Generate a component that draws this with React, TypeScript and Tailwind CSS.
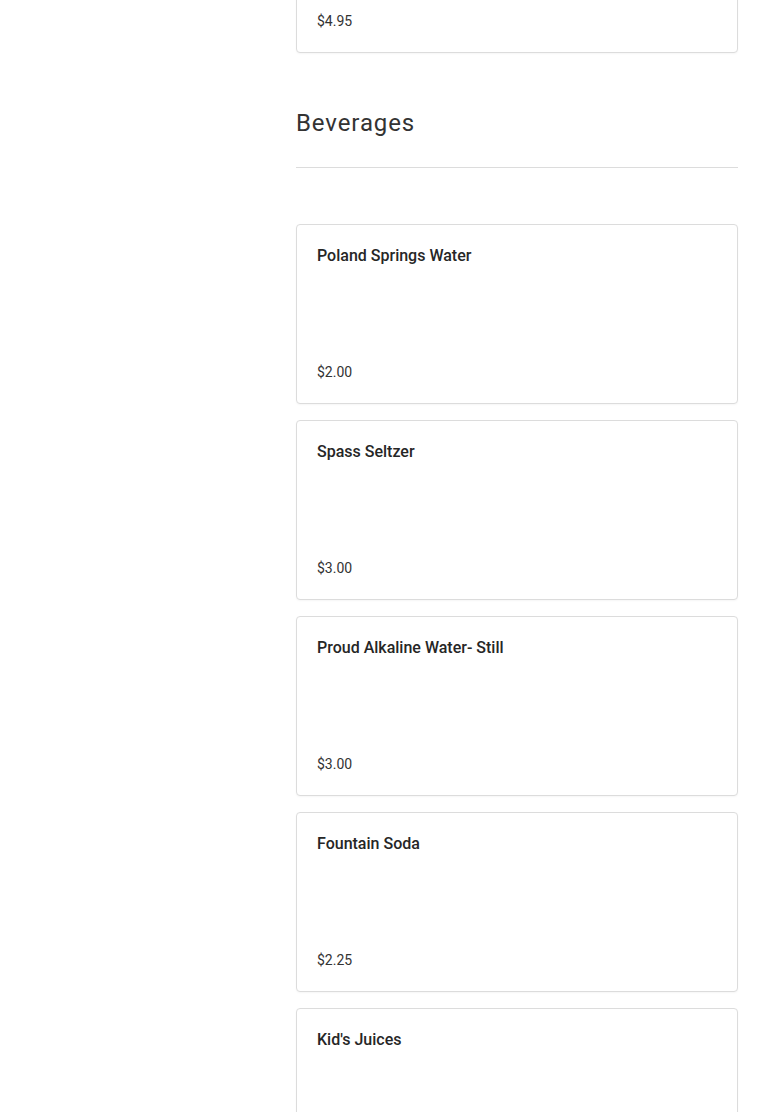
import React from "react";

const items = [
  { name: "Poland Springs Water", price: "$2.00" },
  { name: "Spass Seltzer", price: "$3.00" },
  { name: "Proud Alkaline Water- Still", price: "$3.00" },
  { name: "Fountain Soda", price: "$2.25" },
  { name: "Kid's Juices", price: "$2.50" },
];

function ItemCard({ name, price, className = "" }: { name?: string; price: string; className?: string }) {
  return (
    <div
      className={`h-[180px] flex flex-col justify-between rounded border border-[#dcdcdc] bg-white px-5 pt-[21px] pb-[21px] shadow-[0_1px_2px_rgba(0,0,0,0.04)] ${className}`}
    >
      <h3 className="text-[16px] leading-5 font-medium text-[#262626]">{name}</h3>
      <p className="text-[14px] leading-5 text-[#333]">{price}</p>
    </div>
  );
}

export default function App() {
  return (
    <main
      className="min-h-screen bg-white flex overflow-hidden"
      style={{ fontFamily: "Roboto, 'Noto Sans', sans-serif" }}
    >
      <aside className="w-[296px] shrink-0" />
      <section className="w-[442px] flex flex-col">
        <ItemCard price="$4.95" className="mt-[-127px]" />

        <div className="mt-[54px] border-b border-[#dcdcdc] pb-[28px]">
          <h2 className="text-[24px] leading-8 tracking-[0.9px] text-[#333]">Beverages</h2>
        </div>

        <div className="mt-[56px] flex flex-col gap-4">
          {items.map((it) => (
            <ItemCard key={it.name} name={it.name} price={it.price} />
          ))}
        </div>
      </section>
    </main>
  );
}
